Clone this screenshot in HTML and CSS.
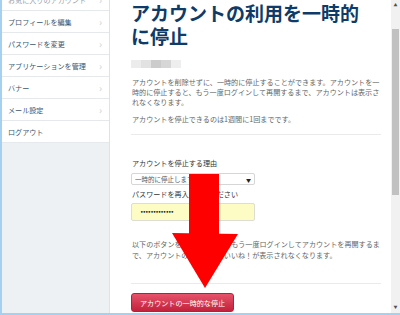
FILE: index.html
```html
<!DOCTYPE html>
<html lang="ja">
<head>
    <meta charset="UTF-8">
    <title>アカウントの利用を一時的に停止</title>
    <link rel="stylesheet" href="styles.css">
</head>
<body>

    <div class="window">

        <!-- SETTINGS MENU -->
        <aside class="sidebar">
            <ul class="menu">
                <li class="menu-item menu-cut">お気に入りのアカウント<span class="chev">›</span></li>
                <li class="menu-item">プロフィールを編集<span class="chev">›</span></li>
                <li class="menu-item">パスワードを変更<span class="chev">›</span></li>
                <li class="menu-item">アプリケーションを管理<span class="chev">›</span></li>
                <li class="menu-item">バナー<span class="chev">›</span></li>
                <li class="menu-item">メール設定<span class="chev">›</span></li>
                <li class="menu-item">ログアウト</li>
            </ul>
        </aside>

        <!-- MAIN CONTENT -->
        <main class="content">
            <h1>アカウントの利用を一時的に停止</h1>

            <div class="blur">
                <span class="px px-1"></span>
                <span class="px px-2"></span>
                <span class="px px-3"></span>
                <span class="px px-4"></span>
                <span class="px px-5"></span>
            </div>

            <p class="text">アカウントを削除せずに、一時的に停止することができます。アカウントを一時的に停止すると、もう一度ログインして再開するまで、アカウントは表示されなくなります。</p>
            <p class="text text-note">アカウントを停止できるのは1週間に1回までです。</p>

            <hr class="rule">

            <label class="field-label">アカウントを停止する理由</label>
            <div class="select">一時的に停止します<span class="caret">▼</span></div>

            <label class="field-label">パスワードを再入力してください</label>
            <div class="password">•••••••••••••</div>

            <p class="text text-warn">以下のボタンをクリックするともう一度ログインしてアカウントを再開するまで、アカウントのツイート、いいね！が表示されなくなります。</p>

            <hr class="rule rule-low">

            <button class="btn-stop">アカウントの一時的な停止</button>
        </main>

        <!-- SCROLLBAR -->
        <div class="scrollbar">
            <span class="sb-btn">▲</span>
            <div class="thumb"></div>
            <span class="sb-btn sb-down">▼</span>
        </div>

    </div>

    <!-- RED ARROW OVERLAY -->
    <svg class="arrow" width="400" height="315" viewBox="0 0 400 315">
        <rect x="189" y="174" width="30" height="61" fill="#ff0000"/>
        <polygon points="172,233 238,234 205,288" fill="#ff0000"/>
    </svg>

</body>
</html>
```

FILE: styles.css
```css
* {
    padding: 0;
    margin: 0;
    box-sizing: border-box;
}
body {
    position: relative;
    width: 400px;
    height: 315px;
    overflow: hidden;
    background-color: white;
    font-family: "Noto Sans CJK JP", "Noto Sans", sans-serif;
}
.window {
    display: flex;
    height: 315px;
    border-left: 2px solid rgb(166,208,239);
    border-bottom: 2px solid rgb(166,208,239);
}

/* sidebar */
.sidebar {
    width: 108px;
    flex-shrink: 0;
    background-color: rgb(238,241,244);
    border-right: 1px solid rgb(221,227,232);
}
.menu {
    list-style: none;
    background-color: white;
}
.menu-item {
    display: flex;
    align-items: center;
    justify-content: space-between;
    height: 22px;
    padding: 0 7px 0 6px;
    font-size: 7.1px;
    color: rgb(60,86,114);
    border-bottom: 1px solid rgb(229,233,236);
}
.menu-cut {
    margin-top: -11px;
    color: rgb(150,162,175);
}
.chev {
    font-size: 10px;
    color: rgb(204,208,212);
}

/* main */
.content {
    flex: 1;
    padding: 1px 8px 0 21px;
    display: flex;
    flex-direction: column;
    align-items: flex-start;
}
h1 {
    font-size: 19px;
    line-height: 23px;
    font-weight: bold;
    color: rgb(14,59,103);
    padding-right: 12px;
}
.blur {
    display: flex;
    margin-top: 13px;
    height: 8px;
}
.px {
    display: block;
    width: 10px;
    height: 8px;
}
.px-1 { background-color: rgb(236,236,236); }
.px-2 { background-color: rgb(226,226,226); }
.px-3 { background-color: rgb(204,204,204); }
.px-4 { background-color: rgb(214,214,214); }
.px-5 { background-color: rgb(238,238,238); }
.text {
    font-size: 7.1px;
    line-height: 10px;
    color: rgb(102,102,102);
    margin-top: 9px;
    width: 252px;
    padding-left: 1px;
}
.text-note {
    margin-top: 7px;
}
.text-warn {
    margin-top: 18px;
    line-height: 11px;
}
.rule {
    width: 250px;
    border: none;
    border-top: 1px solid rgb(234,234,234);
    margin-top: 10px;
}
.rule-low {
    margin-top: 22px;
}
.field-label {
    display: block;
    font-size: 7.1px;
    line-height: 10px;
    color: rgb(51,51,51);
    margin-top: 23px;
    padding-left: 1px;
}
.select + .field-label {
    margin-top: 4px;
}
.select {
    display: flex;
    justify-content: space-between;
    align-items: center;
    width: 124px;
    height: 12px;
    margin-top: 5px;
    padding: 0 3px 0 3px;
    border: 1px solid rgb(214,214,214);
    border-radius: 2px;
    font-size: 6.5px;
    color: rgb(85,85,85);
}
.caret {
    font-size: 5px;
    color: rgb(34,34,34);
}
.password {
    width: 124px;
    height: 18px;
    margin-top: 4px;
    padding-left: 8px;
    border: 1px solid rgb(221,221,210);
    border-radius: 2px;
    background-color: rgb(252,252,196);
    font-family: "DejaVu Sans", sans-serif;
    font-size: 6px;
    line-height: 16px;
    letter-spacing: -1px;
    color: rgb(20,20,20);
}
.btn-stop {
    margin-top: 9px;
    height: 19px;
    padding: 0 8px;
    font-family: "Noto Sans CJK JP", "Noto Sans", sans-serif;
    font-size: 7.1px;
    color: white;
    background: linear-gradient(rgb(229,83,106), rgb(196,33,60));
    border: 1px solid rgb(184,30,54);
    border-radius: 3px;
}

/* scrollbar */
.scrollbar {
    width: 9px;
    flex-shrink: 0;
    display: flex;
    flex-direction: column;
    align-items: center;
    background-color: rgb(241,241,241);
}
.sb-btn {
    height: 12px;
    font-size: 4px;
    line-height: 10px;
    color: rgb(80,80,80);
}
.sb-down {
    margin-top: auto;
    line-height: 12px;
}
.thumb {
    width: 7px;
    height: 166px;
    margin-top: 17px;
    background-color: rgb(193,193,193);
}

/* arrow */
.arrow {
    position: absolute;
    top: 0;
    left: 0;
    pointer-events: none;
}
```
